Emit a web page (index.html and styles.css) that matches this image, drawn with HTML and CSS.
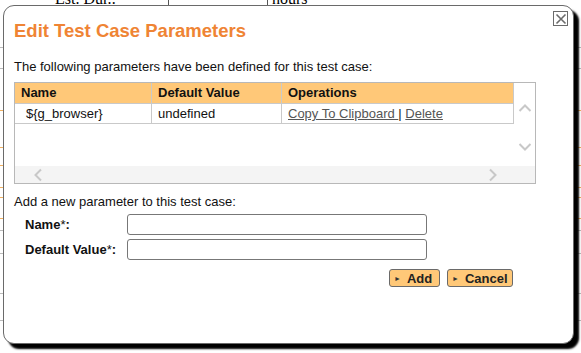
FILE: index.html
```html
<!DOCTYPE html>
<html>
<head>
<meta charset="utf-8">
<link rel="stylesheet" href="styles.css">
</head>
<body>
<div class="page-behind">
  <span class="bg-text bg-est">Est. Dur.:</span>
  <span class="bg-text bg-hours">hours</span>
  <i class="vline v1"></i>
  <i class="vline v2"></i>
  <i class="hline gray" style="top:47px"></i>
  <i class="hline gray" style="top:68px"></i>
  <i class="hline orange" style="top:110px"></i>
  <i class="hline orange" style="top:147px"></i>
  <i class="hline orange" style="top:165px"></i>
  <i class="hline orange" style="top:187px"></i>
  <i class="hline orange" style="top:197px"></i>
  <i class="hline orange" style="top:218px"></i>
  <i class="hline gray" style="top:230px"></i>
  <i class="hline gray" style="top:253px"></i>
  <i class="hline gray" style="top:293px"></i>
  <i class="hline gray" style="top:320px"></i>
</div>

<div class="dialog">
  <button class="close" aria-label="Close">
    <svg width="12" height="12" viewBox="0 0 12 12"><path d="M1.5 1.5 L10.5 10.5 M10.5 1.5 L1.5 10.5" stroke="#6b6b6b" stroke-width="1.6" fill="none"/></svg>
  </button>
  <div class="content">
    <h2 class="title">Edit Test Case Parameters</h2>
    <p class="intro">The following parameters have been defined for this test case:</p>

    <div class="scroller">
      <div class="table-area">
        <table class="params">
          <thead>
            <tr><th class="c1">Name</th><th class="c2">Default Value</th><th class="c3">Operations</th></tr>
          </thead>
          <tbody>
            <tr><td class="c1 name">${g_browser}</td><td class="c2">undefined</td><td class="c3"><a href="#">Copy To Clipboard </a>| <a href="#">Delete</a></td></tr>
          </tbody>
        </table>
      </div>
      <div class="vbar">
        <svg width="14" height="10" viewBox="0 0 14 10"><path d="M1.5 8 L7 2.5 L12.5 8" stroke="#c8c8c8" stroke-width="2" fill="none"/></svg>
        <svg width="14" height="10" viewBox="0 0 14 10"><path d="M1.5 2 L7 7.5 L12.5 2" stroke="#c8c8c8" stroke-width="2" fill="none"/></svg>
      </div>
      <div class="hbar">
        <svg width="10" height="14" viewBox="0 0 10 14"><path d="M8 1.5 L2.5 7 L8 12.5" stroke="#c8c8c8" stroke-width="2" fill="none"/></svg>
        <svg width="10" height="14" viewBox="0 0 10 14"><path d="M2 1.5 L7.5 7 L2 12.5" stroke="#c8c8c8" stroke-width="2" fill="none"/></svg>
      </div>
      <div class="corner"></div>
    </div>

    <p class="add-intro">Add a new parameter to this test case:</p>
    <div class="form-row">
      <label class="lbl">Name<span class="req">*</span>:</label>
      <input class="field" type="text">
    </div>
    <div class="form-row">
      <label class="lbl">Default Value<span class="req">*</span>:</label>
      <input class="field" type="text">
    </div>
    <div class="buttons">
      <button class="btn btn-add"><span class="tri">&#9658;</span>Add</button>
      <button class="btn btn-cancel"><span class="tri">&#9658;</span>Cancel</button>
    </div>
  </div>
</div>
</body>
</html>
```

FILE: styles.css
```css
html, body {
  margin: 0;
  padding: 0;
  width: 581px;
  height: 353px;
  overflow: hidden;
  background: #fff;
  font-family: "Liberation Sans", Arial, sans-serif;
}

.page-behind {
  position: absolute;
  inset: 0;
}
.bg-text {
  position: absolute;
  font-family: "Liberation Serif", serif;
  font-size: 16px;
  line-height: 16px;
  color: #000;
}
.bg-est { left: 55px; top: -9px; }
.bg-hours { left: 272px; top: -9px; }
.vline {
  position: absolute;
  top: 0;
  width: 1px;
  height: 6px;
  background: #555;
}
.v1 { left: 168px; }
.v2 { left: 267px; }
.hline {
  position: absolute;
  left: 0;
  right: 0;
  height: 1px;
}
.hline.gray { background: #bbb; }
.hline.orange { background: #f0b060; }

.dialog {
  position: absolute;
  left: 3px;
  top: 5px;
  width: 571px;
  height: 339px;
  box-sizing: border-box;
  background: #fff;
  border: 1px solid #6a6a6a;
  border-radius: 11px;
  box-shadow: 5px 5px 2px #000;
  padding: 0 0 0 10px;
}

.close {
  position: absolute;
  top: 5px;
  right: 5px;
  width: 15px;
  height: 15px;
  padding: 0;
  margin: 0;
  border: 1px solid #6b6b6b;
  background: #fff;
  display: flex;
  align-items: center;
  justify-content: center;
}

.content {
  width: 522px;
}

.title {
  margin: 0;
  padding-top: 14px;
  font-size: 18.5px;
  line-height: 22px;
  font-weight: bold;
  color: #ef8434;
}

.intro {
  margin: 17px 0 0;
  font-size: 13px;
  line-height: 15px;
  color: #111;
}

.scroller {
  margin-top: 8px;
  width: 522px;
  height: 102px;
  box-sizing: border-box;
  border: 1px solid #b8b8b8;
  display: grid;
  grid-template-columns: 499px 21px;
  grid-template-rows: 83px 17px;
}

.table-area {
  background: #fff;
}

.params {
  width: 499px;
  border-collapse: collapse;
  font-size: 13px;
  color: #111;
  table-layout: fixed;
}
.params th, .params td {
  border: 1px solid #c9c9c9;
  padding: 0 0 0 6px;
  text-align: left;
  white-space: nowrap;
  overflow: hidden;
}
.params tr > :first-child { border-left: none; }
.params thead tr > * { border-top: none; }
.params th {
  background: #ffc878;
  font-weight: bold;
  height: 20px;
  line-height: 20px;
}
.params td {
  height: 19px;
  line-height: 19px;
}
.params .c1 { width: 130px; }
.params .c2 { width: 123px; }
.params td.name { padding-left: 11px; }
.params a {
  color: #555;
  text-decoration: underline;
}

.vbar {
  grid-column: 2;
  grid-row: 1;
  display: flex;
  flex-direction: column;
  align-items: center;
  padding-top: 20px;
  gap: 29px;
  background: #fff;
}
.hbar {
  grid-column: 1;
  grid-row: 2;
  background: #f4f4f4;
  display: flex;
  justify-content: space-between;
  align-items: center;
  padding: 0 16px 0 18px;
}
.corner {
  grid-column: 2;
  grid-row: 2;
  background: #f4f4f4;
}

.add-intro {
  margin: 10px 0 0;
  font-size: 13px;
  line-height: 15px;
  color: #111;
}

.form-row {
  display: flex;
  align-items: center;
  margin-top: 5px;
  height: 20px;
}
.form-row + .form-row { margin-top: 5px; }
.lbl {
  width: 102px;
  padding-left: 11px;
  font-size: 13px;
  font-weight: bold;
  color: #111;
}
.req { font-weight: normal; }
.field {
  width: 300px;
  height: 21px;
  box-sizing: border-box;
  margin: 0;
  border: 1px solid #777;
  border-radius: 3px;
  background: #fff;
}

.buttons {
  display: flex;
  justify-content: flex-end;
  gap: 7px;
  margin-top: 10px;
  padding-right: 23px;
}
.btn {
  height: 18px;
  box-sizing: border-box;
  margin: 0;
  padding: 0 6px 0 4px;
  border: 1px solid #6a6a6a;
  border-radius: 3px;
  background: #ffc878;
  font-family: "Liberation Sans", Arial, sans-serif;
  font-size: 13px;
  font-weight: bold;
  color: #222;
  display: flex;
  align-items: center;
}
.tri {
  font-size: 7px;
  margin-right: 6px;
  color: #333;
}
.btn-add { width: 51px; }
.btn-cancel { width: 66px; }
```
